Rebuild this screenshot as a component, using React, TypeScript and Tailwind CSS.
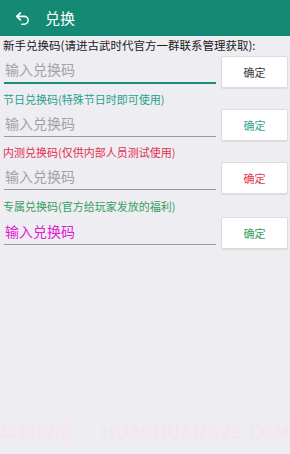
import { Undo2 } from "lucide-react";

const FONT = { fontFamily: '"Noto Sans CJK SC", "Noto Sans", sans-serif' };

type Section = {
  label: string;
  labelClass: string;
  btnClass: string;
  lineClass: string;
  inputClass: string;
};

const SECTIONS: Section[] = [
  {
    label: "新手兑换码(请进古武时代官方一群联系管理获取):",
    labelClass: "text-[#1a1a1a] text-[11.5px]",
    btnClass: "text-[#3a3a3a]",
    lineClass: "h-[2px] bg-[#1a8c78]",
    inputClass: "placeholder:text-[#a3a3a3]",
  },
  {
    label: "节日兑换码(特殊节日时即可使用)",
    labelClass: "text-[#27a28c] text-[11px]",
    btnClass: "text-[#35a58f]",
    lineClass: "h-[1.5px] bg-[#9b9b9b]",
    inputClass: "placeholder:text-[#a3a3a3]",
  },
  {
    label: "内测兑换码(仅供内部人员测试使用)",
    labelClass: "text-[#e2304f] text-[11px]",
    btnClass: "text-[#e2364f]",
    lineClass: "h-[1.5px] bg-[#9b9b9b]",
    inputClass: "placeholder:text-[#a3a3a3]",
  },
  {
    label: "专属兑换码(官方给玩家发放的福利)",
    labelClass: "text-[#35a060] text-[11px]",
    btnClass: "text-[#3a9c62]",
    lineClass: "h-[1.5px] bg-[#9b9b9b]",
    inputClass: "placeholder:text-[#e020d2]",
  },
];

export default function App() {
  return (
    <div className="w-[290px] h-[454px] bg-[#eeedf2] flex flex-col overflow-hidden" style={FONT}>
      {/* toolbar */}
      <div className="h-[36px] bg-[#148a74] flex items-center shrink-0">
        <Undo2 className="w-[17px] h-[17px] text-white ml-[14px]" strokeWidth={2.2} />
        <span className="text-white text-[15px] ml-[14px]">兑换</span>
      </div>

      {SECTIONS.map((s, i) => (
        <div key={s.label} className="flex flex-col pl-[3px] pr-[2px]">
          <div
            className={`${i === 3 ? "h-[22px]" : "h-[20px]"} flex items-center leading-none whitespace-nowrap ${s.labelClass}`}
          >
            {s.label}
          </div>
          <div className="h-[33px] flex items-start">
            <div className="flex-1 h-[32px] flex flex-col justify-end pb-[4px] pl-[1px] mr-[5px]">
              <input
                placeholder="输入兑换码"
                className={`w-full bg-transparent outline-none text-[14px] leading-[20px] px-[1px] ${s.inputClass}`}
                style={FONT}
              />
              <div className={`mt-[3px] ${s.lineClass}`} />
            </div>
            <button
              className={`w-[67px] h-[32px] bg-white border border-[#dcdcdc] rounded-[2px] shadow-[0_1px_1px_rgba(0,0,0,0.08)] text-[11px] ${s.btnClass}`}
            >
              确定
            </button>
          </div>
        </div>
      ))}

      <div className="flex-1" />
      {/* faint watermark */}
      <div className="h-[46px] flex items-start justify-center pt-[10px]">
        <span className="text-[#f4e6f1] text-[18px] font-bold whitespace-nowrap tracking-[0.5px]">
          华创应用 · HUACHUANG25.COM
        </span>
      </div>
    </div>
  );
}
